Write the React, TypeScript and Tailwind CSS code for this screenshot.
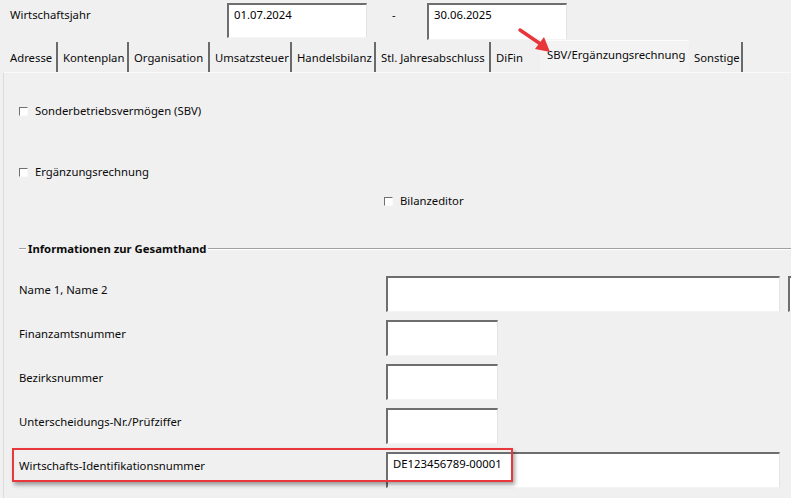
import React from 'react';

const sunken =
  'bg-white border-t-2 border-l-2 border-r border-b border-t-[#6e6e6e] border-l-[#6e6e6e] border-r-[#e3e3e3] border-b-[#f4f4f4]';

const Field: React.FC<{ className?: string; value?: string }> = ({ className = '', value }) => (
  <div className={`${sunken} ${className} shrink-0 pl-[5px] pt-[2px] leading-[16px] text-black`}>{value}</div>
);

const Check: React.FC<{ label: string; className?: string }> = ({ label, className = '' }) => (
  <div className={`flex items-center ${className}`}>
    <span className="w-[9px] h-[9px] bg-white border-t border-l border-t-[#707070] border-l-[#707070] border-r border-b border-r-[#fafafa] border-b-[#fafafa] mr-[7px]" />
    <span>{label}</span>
  </div>
);

const tabs: { label: string; w: number; active?: boolean }[] = [
  { label: 'Adresse', w: 53 },
  { label: 'Kontenplan', w: 71 },
  { label: 'Organisation', w: 81 },
  { label: 'Umsatzsteuer', w: 82 },
  { label: 'Handelsbilanz', w: 84 },
  { label: 'Stl. Jahresabschluss', w: 115 },
  { label: 'DiFin', w: 49 },
  { label: 'SBV/Ergänzungsrechnung', w: 149, active: true },
  { label: 'Sonstige', w: 54 },
];

const rows: { label: string; wide?: boolean; value?: string }[] = [
  { label: 'Name 1, Name 2', wide: true },
  { label: 'Finanzamtsnummer' },
  { label: 'Bezirksnummer' },
  { label: 'Unterscheidungs-Nr./Prüfziffer' },
  { label: 'Wirtschafts-Identifikationsnummer', wide: true, value: 'DE123456789-00001' },
];

export default function App() {
  return (
    <div
      className="relative w-[791px] h-[498px] overflow-hidden bg-[#f0f0f0] text-[11.3px] leading-[16px] text-[#0a0a0a] whitespace-nowrap"
      style={{ fontFamily: '"Segoe UI", "Noto Sans", "Liberation Sans", sans-serif' }}
    >
      {/* Wirtschaftsjahr */}
      <div className="flex items-start pt-[3px] h-[40px]">
        <div className="ml-[10px] mt-[4px] w-[217px] shrink-0">Wirtschaftsjahr</div>
        <Field className="w-[140px] h-[35px]" value="01.07.2024" />
        <div className="w-[60px] shrink-0 pl-[25px] mt-[4px]">-</div>
        <Field className="w-[140px] h-[37px]" value="30.06.2025" />
      </div>

      {/* Tabs */}
      <div className="flex items-end h-[32px] pl-[5px]">
        {tabs.map((t) =>
          t.active ? (
            <div
              key={t.label}
              className="h-[32px] shrink-0 bg-[#f3f3f3] border-t border-[#fcfcfc] pl-[7px] pt-[6px]"
              style={{ width: t.w }}
            >
              {t.label}
            </div>
          ) : (
            <div
              key={t.label}
              className={`h-[30px] shrink-0 flex items-center pl-[5px] pt-[1px] ${t.label === 'DiFin' ? '' : 'border-r-2 border-r-[#6a6a6a]'}`}
              style={{ width: t.w }}
            >
              {t.label}
            </div>
          )
        )}
      </div>

      {/* Panel */}
      <div className="ml-[3px] border-l border-t border-l-[#dcdcdc] border-t-[#fafafa] h-[426px]">
        <Check label="Sonderbetriebsvermögen (SBV)" className="ml-[15px] mt-[30px]" />
        <Check label="Ergänzungsrechnung" className="ml-[15px] mt-[45px]" />
        <Check label="Bilanzeditor" className="ml-[380px] mt-[13px]" />

        <div className="flex items-center mt-[32px] ml-[15px]">
          <div className="w-[7px] border-t border-b border-t-[#a0a0a0] border-b-white" />
          <div className="font-bold px-[2px]">Informationen zur Gesamthand</div>
          <div className="flex-1 border-t border-b border-t-[#a0a0a0] border-b-white" />
        </div>

        <div className="flex flex-col gap-[8px] mt-[19px]">
          {rows.map((r) => (
            <div key={r.label} className="flex items-start h-[36px]">
              <div className="w-[382px] shrink-0 pl-[15px] pt-[6px]">{r.label}</div>
              <Field className={r.wide ? 'w-[394px] h-[36px]' : 'w-[112px] h-[36px]'} value={r.value} />
              {r.label === 'Name 1, Name 2' && <Field className="ml-[8px] w-[20px] h-[36px]" />}
            </div>
          ))}
        </div>
      </div>

      {/* Annotation arrow */}
      <svg className="absolute left-[515px] top-[26px]" width="44" height="32" viewBox="0 0 44 32">
        <line x1="5" y1="4" x2="27" y2="19" stroke="#e8363a" strokeWidth="3.5" strokeLinecap="round" />
        <polygon points="35,26 20,23 29,11" fill="#e8363a" />
      </svg>

      {/* Highlight box */}
      <div className="absolute left-[12px] top-[448px] w-[501px] h-[34px] border-2 border-[#e8383d] shadow-[2px_3px_4px_rgba(0,0,0,0.35)]" />
    </div>
  );
}
